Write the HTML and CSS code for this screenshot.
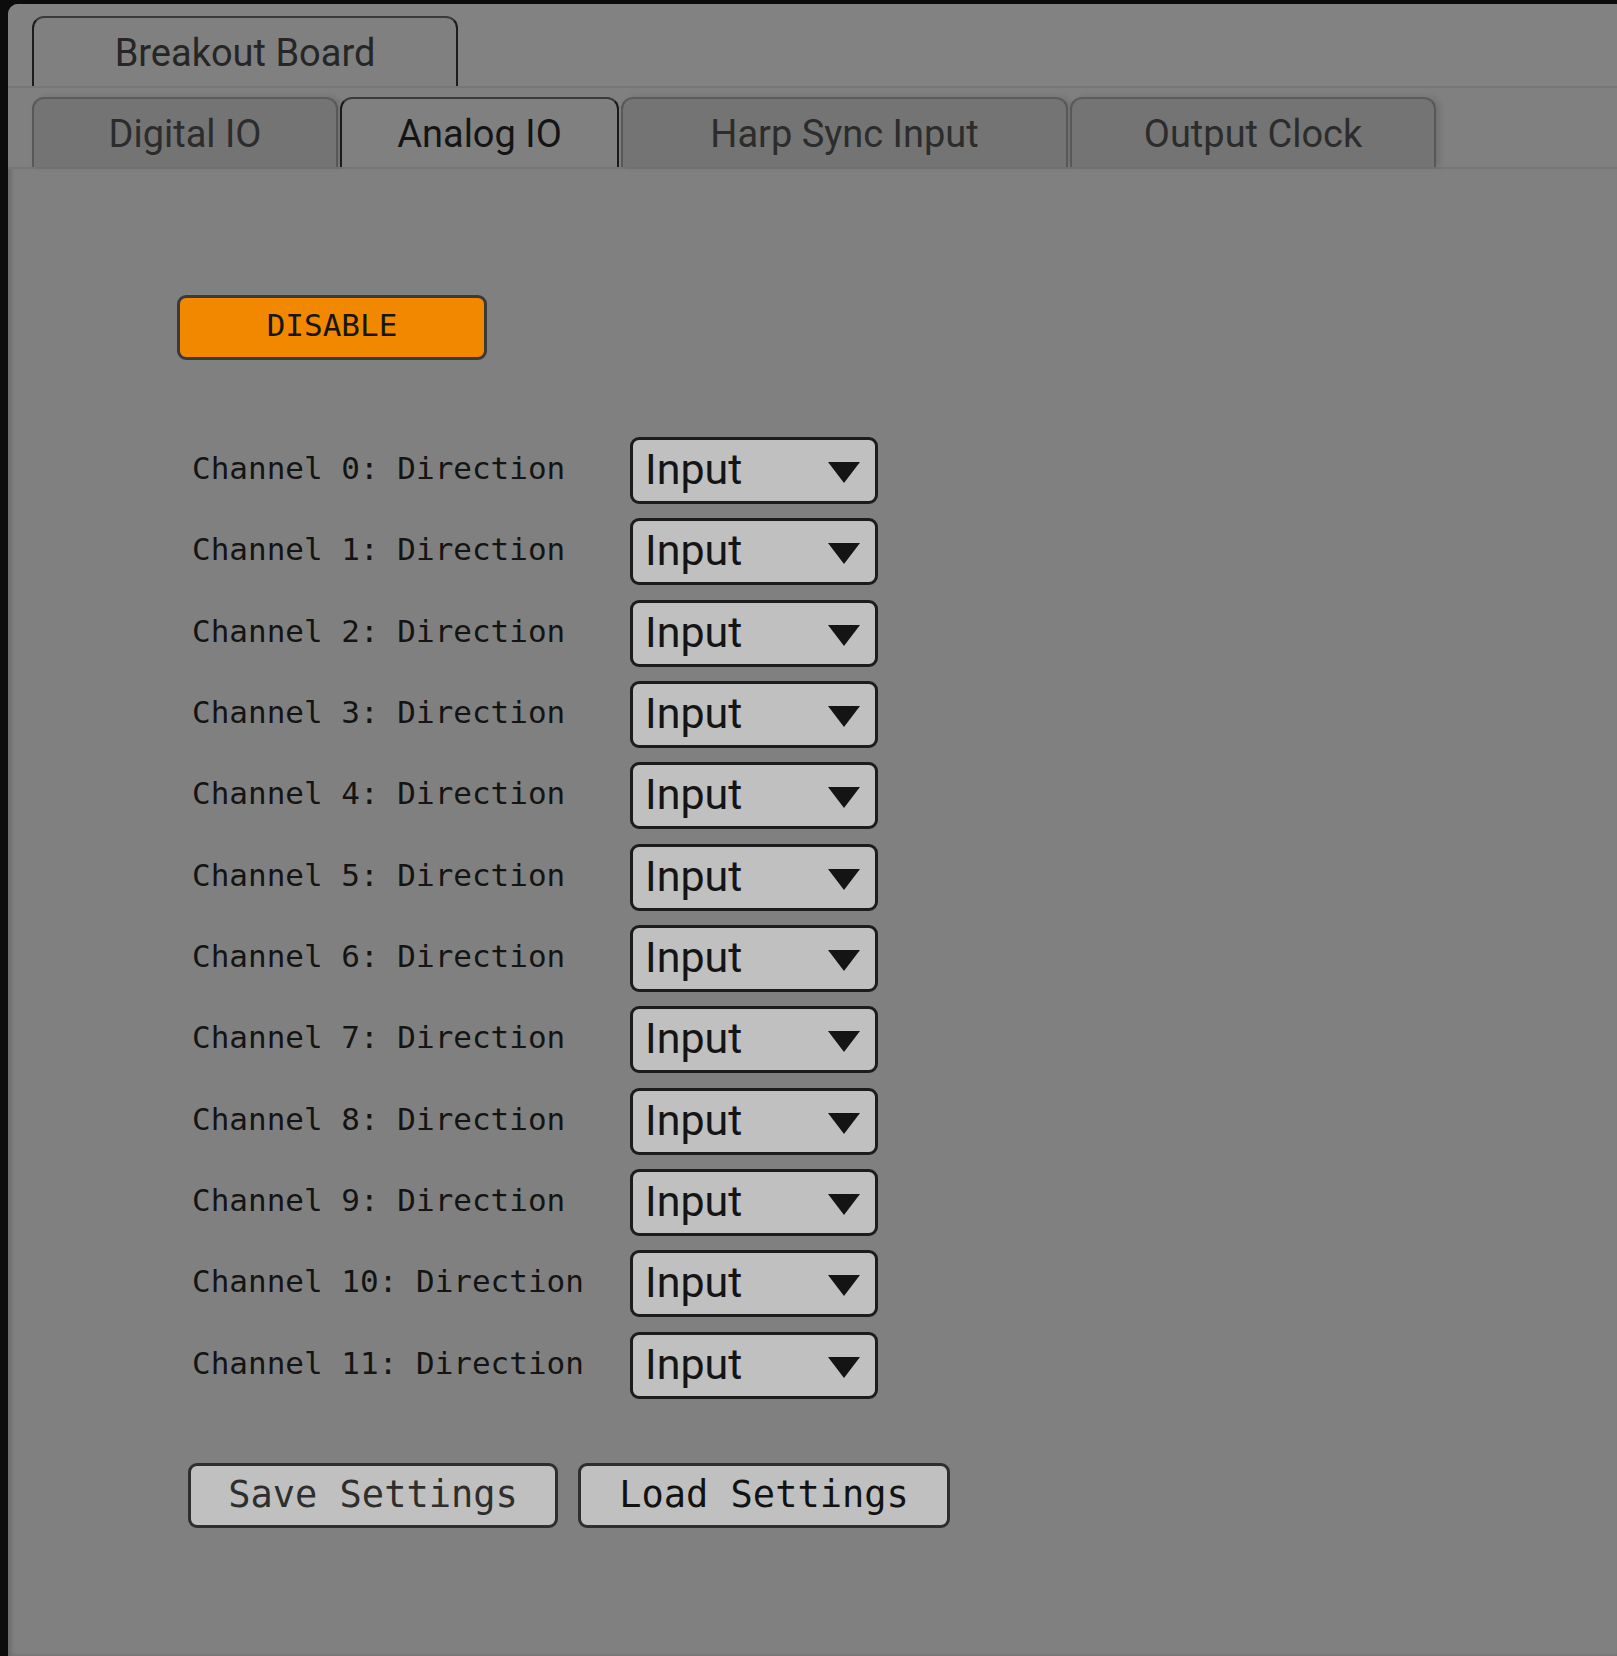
FILE: index.html
```html
<!DOCTYPE html>
<html lang="en">
<head>
<meta charset="utf-8">
<title>Breakout Board</title>
<link rel="stylesheet" href="styles.css">
</head>
<body>
<div class="frame">
  <div class="window">
    <div class="tabbar tabbar-top">
      <div class="tab tab-main">Breakout Board</div>
    </div>
    <div class="tabbar tabbar-sub">
      <div class="tab tab-off tab-digital">Digital IO</div>
      <div class="tab tab-on tab-analog">Analog IO</div>
      <div class="tab tab-off tab-harp">Harp Sync Input</div>
      <div class="tab tab-off tab-clock">Output Clock</div>
    </div>
    <div class="content">
      <button class="btn btn-disable">DISABLE</button>
      <div class="channels">
        <div class="row"><span class="label">Channel 0: Direction</span><div class="select"><span class="value">Input</span><svg class="arrow" viewBox="0 0 32 21"><polygon points="0,0 32,0 16,21"/></svg></div></div>
        <div class="row"><span class="label">Channel 1: Direction</span><div class="select"><span class="value">Input</span><svg class="arrow" viewBox="0 0 32 21"><polygon points="0,0 32,0 16,21"/></svg></div></div>
        <div class="row"><span class="label">Channel 2: Direction</span><div class="select"><span class="value">Input</span><svg class="arrow" viewBox="0 0 32 21"><polygon points="0,0 32,0 16,21"/></svg></div></div>
        <div class="row"><span class="label">Channel 3: Direction</span><div class="select"><span class="value">Input</span><svg class="arrow" viewBox="0 0 32 21"><polygon points="0,0 32,0 16,21"/></svg></div></div>
        <div class="row"><span class="label">Channel 4: Direction</span><div class="select"><span class="value">Input</span><svg class="arrow" viewBox="0 0 32 21"><polygon points="0,0 32,0 16,21"/></svg></div></div>
        <div class="row"><span class="label">Channel 5: Direction</span><div class="select"><span class="value">Input</span><svg class="arrow" viewBox="0 0 32 21"><polygon points="0,0 32,0 16,21"/></svg></div></div>
        <div class="row"><span class="label">Channel 6: Direction</span><div class="select"><span class="value">Input</span><svg class="arrow" viewBox="0 0 32 21"><polygon points="0,0 32,0 16,21"/></svg></div></div>
        <div class="row"><span class="label">Channel 7: Direction</span><div class="select"><span class="value">Input</span><svg class="arrow" viewBox="0 0 32 21"><polygon points="0,0 32,0 16,21"/></svg></div></div>
        <div class="row"><span class="label">Channel 8: Direction</span><div class="select"><span class="value">Input</span><svg class="arrow" viewBox="0 0 32 21"><polygon points="0,0 32,0 16,21"/></svg></div></div>
        <div class="row"><span class="label">Channel 9: Direction</span><div class="select"><span class="value">Input</span><svg class="arrow" viewBox="0 0 32 21"><polygon points="0,0 32,0 16,21"/></svg></div></div>
        <div class="row"><span class="label">Channel 10: Direction</span><div class="select"><span class="value">Input</span><svg class="arrow" viewBox="0 0 32 21"><polygon points="0,0 32,0 16,21"/></svg></div></div>
        <div class="row"><span class="label">Channel 11: Direction</span><div class="select"><span class="value">Input</span><svg class="arrow" viewBox="0 0 32 21"><polygon points="0,0 32,0 16,21"/></svg></div></div>
      </div>
      <div class="actions">
        <button class="btn btn-gray btn-save">Save Settings</button>
        <button class="btn btn-gray btn-load">Load Settings</button>
      </div>
    </div>
  </div>
</div>
</body>
</html>
```
FILE: styles.css
```css
html, body {
  margin: 0;
  padding: 0;
  height: 100%;
}
body {
  background: #0c0c0c;
  overflow: hidden;
}
.frame {
  padding: 4px 0 0 8px;
  height: 1656px;
  box-sizing: border-box;
}
.window {
  background: #808080;
  height: 100%;
  border-top-left-radius: 10px;
  overflow: hidden;
  box-shadow: inset 3px 0 4px rgba(0, 0, 0, 0.18);
}
.tabbar {
  display: flex;
  align-items: flex-end;
  box-sizing: border-box;
  border-bottom: 2px solid #767676;
}
.tabbar-top {
  height: 84px;
  padding-left: 24px;
  background: #828282;
}
.tabbar-sub {
  height: 81px;
  padding-left: 24px;
  gap: 2px;
  background: #808080;
}
.tab {
  height: 70px;
  box-sizing: border-box;
  display: flex;
  align-items: center;
  justify-content: center;
  font-family: Roboto, "Liberation Sans", sans-serif;
  font-size: 38px;
  border-top-left-radius: 12px;
  border-top-right-radius: 12px;
  border: 2px solid #2a2a2a;
  border-bottom: none;
  padding-top: 2px;
}
.tab-main {
  width: 426px;
  background: #808080;
  color: #262626;
  border-color: #3a3a3a #1c1c1c #1c1c1c #1c1c1c;
}
.tab-on {
  background: #808080;
  color: #141414;
  border-color: #3a3a3a #1a1a1a #1a1a1a #1a1a1a;
}
.tab-off {
  background: #747474;
  color: #2c2c2c;
  border-color: #5c5c5c #585858 #585858 #585858;
  box-shadow: 4px 0 6px rgba(0, 0, 0, 0.12);
}
.tab-digital { width: 306px; }
.tab-analog { width: 279px; }
.tab-harp { width: 447px; }
.tab-clock { width: 366px; }

.content {
  padding-top: 126px;
}
.btn {
  display: block;
  box-sizing: border-box;
  height: 65px;
  border: 3px solid #2a2a2a;
  border-radius: 9px;
  font-family: "DejaVu Sans Mono", "Liberation Mono", monospace;
  padding: 0;
  margin: 0;
}
.btn-disable {
  margin-left: 169px;
  width: 310px;
  background: #f28800;
  color: #161616;
  font-size: 31px;
  border-color: #3a3a3a;
  padding-bottom: 6px;
}
.channels {
  margin-top: 77px;
  margin-left: 184px;
  display: grid;
  grid-auto-rows: 67px;
  row-gap: 14.33px;
}
.row {
  display: flex;
  align-items: center;
}
.label {
  width: 438px;
  font-family: "DejaVu Sans Mono", "Liberation Mono", monospace;
  font-size: 31px;
  color: #141414;
  padding-bottom: 5px;
}
.select {
  width: 248px;
  height: 67px;
  box-sizing: border-box;
  background: #c0c0c0;
  border: 3px solid #1c1c1c;
  border-radius: 9px;
  display: flex;
  align-items: center;
  justify-content: space-between;
  padding: 0 15px 0 12px;
}
.value {
  font-family: Roboto, "Liberation Sans", sans-serif;
  font-size: 43px;
  color: #151515;
  line-height: 1;
  padding-bottom: 2px;
}
.arrow {
  width: 32px;
  height: 21px;
  fill: #141414;
  margin-top: 4px;
}
.actions {
  margin-top: 64px;
  margin-left: 180px;
  display: flex;
  gap: 20px;
}
.btn-gray {
  background: #c0c0c0;
  font-size: 37px;
  border-color: #2e2e2e;
  padding-bottom: 2px;
}
.btn-save {
  width: 370px;
  color: #2e2e2e;
}
.btn-load {
  width: 372px;
  color: #121212;
}
```
